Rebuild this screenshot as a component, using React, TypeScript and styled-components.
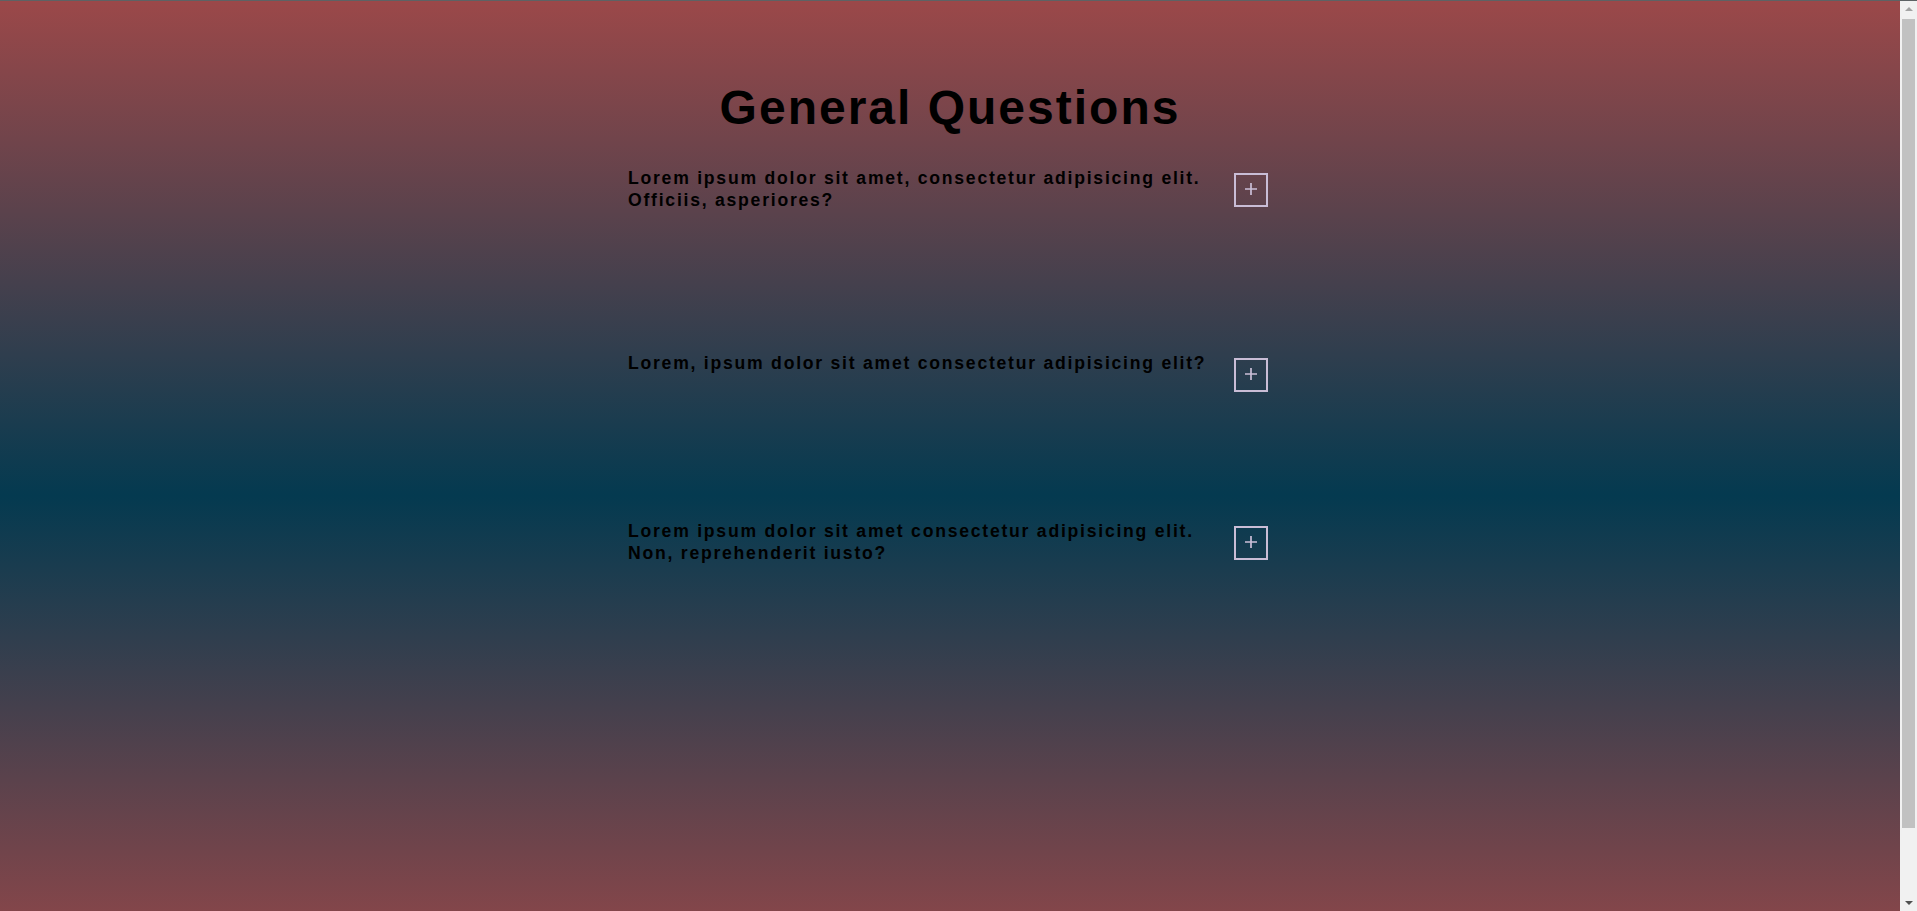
import React from "react";
import styled, { createGlobalStyle } from "styled-components";

const GlobalStyle = createGlobalStyle`
  html, body {
    margin: 0;
    padding: 0;
  }
  body {
    font-family: "Liberation Sans", Arial, sans-serif;
    color: #000;
    background: #f1f1f1;
  }
  * { box-sizing: border-box; }
`;

const Page = styled.main`
  min-height: 990px;
  margin-right: 17px;
  padding-top: 47px;
  border-top: 1px solid #5d6264;
  background: linear-gradient(to bottom, #9b4849 0%, #043a50 50%, #9b4849 100%);
`;

const Title = styled.h1`
  margin: 32px 0;
  text-align: center;
  font-size: 48px;
  font-weight: 700;
  letter-spacing: 2px;
  line-height: 55px;
`;

const List = styled.section`
  width: 644px;
  padding-right: 4px;
  margin: 0 auto;
  display: flex;
  flex-direction: column;
`;

const Item = styled.article<{ $space: number }>`
  padding-bottom: ${(p) => p.$space}px;
`;

const Header = styled.div`
  display: flex;
  align-items: flex-start;
  justify-content: space-between;
  gap: 20px;
`;

const Question = styled.h3`
  margin: 0;
  flex: 1;
  font-size: 17.6px;
  font-weight: 700;
  letter-spacing: 0.1em;
  line-height: 22px;
`;

const Toggle = styled.button`
  flex: none;
  width: 34px;
  height: 34px;
  margin-top: 6px;
  padding: 0;
  border: 2px solid #c9bdd6;
  background: transparent;
  display: flex;
  align-items: center;
  justify-content: center;
  cursor: pointer;
`;

/* visual stand-in for the browser's classic scrollbar, laid over the right edge */
const ScrollRail = styled.div`
  position: fixed;
  top: 0;
  right: 0;
  width: 17px;
  height: 100vh;
  background: #f1f1f1;
  border-top: 1px solid #5d6264;
  display: grid;
  grid-template-rows: 16px 1fr 17px;
`;

const ScrollArrow = styled.div<{ $down?: boolean; $color: string }>`
  display: flex;
  align-items: center;
  justify-content: center;
  &::before {
    content: "";
    width: 0;
    height: 0;
    border-left: 4px solid transparent;
    border-right: 4px solid transparent;
    ${(p) =>
      p.$down
        ? `border-top: 4px solid ${p.$color};`
        : `border-bottom: 4px solid ${p.$color};`}
  }
`;

const ScrollTrack = styled.div`
  padding: 2px 2px 0;
`;

const ScrollThumb = styled.div`
  height: 809px;
  background: #c1c1c1;
`;

const PlusIcon = () => (
  <svg width="14" height="14" viewBox="0 0 14 14" style={{ marginTop: -2 }}>
    <path d="M7 1v12M1 7h12" stroke="#cbbfd8" strokeWidth="1.7" fill="none" />
  </svg>
);

const items = [
  {
    q: "Lorem ipsum dolor sit amet, consectetur adipisicing elit. Officiis, asperiores?",
    space: 141,
  },
  {
    q: "Lorem, ipsum dolor sit amet consectetur adipisicing elit?",
    space: 128,
  },
  {
    q: "Lorem ipsum dolor sit amet consectetur adipisicing elit. Non, reprehenderit iusto?",
    space: 128,
  },
];

export default function App() {
  return (
    <>
      <GlobalStyle />
      <Page>
        <Title>General Questions</Title>
        <List>
          {items.map((it) => (
            <Item key={it.q} $space={it.space}>
              <Header>
                <Question>{it.q}</Question>
                <Toggle aria-label="expand">
                  <PlusIcon />
                </Toggle>
              </Header>
            </Item>
          ))}
        </List>
      </Page>
      <ScrollRail aria-hidden="true">
        <ScrollArrow $color="#a3a3a3" />
        <ScrollTrack>
          <ScrollThumb />
        </ScrollTrack>
        <ScrollArrow $down $color="#505050" />
      </ScrollRail>
    </>
  );
}
